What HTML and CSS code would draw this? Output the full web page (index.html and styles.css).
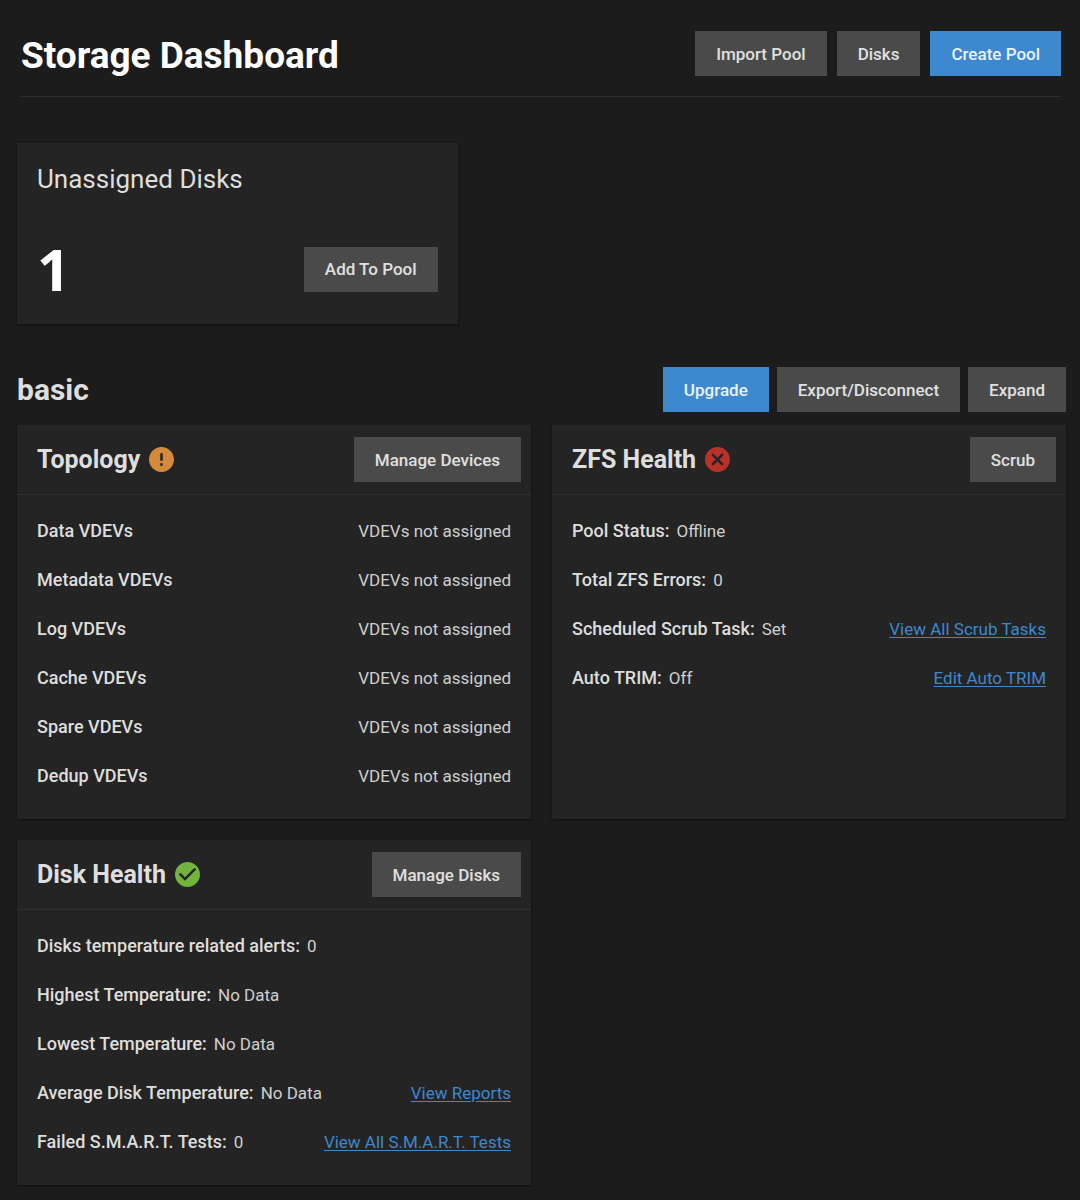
FILE: index.html
```html
<!DOCTYPE html>
<html lang="en">
<head>
<meta charset="utf-8">
<meta name="viewport" content="width=device-width, initial-scale=1">
<title>Storage Dashboard</title>
<link rel="stylesheet" href="styles.css">
</head>
<body>
<header class="page-header">
  <h1 class="page-title">Storage Dashboard</h1>
  <div class="page-actions">
    <button class="btn" type="button">Import Pool</button>
    <button class="btn" type="button">Disks</button>
    <button class="btn btn-primary" type="button">Create Pool</button>
  </div>
</header>

<main>
  <section class="card unassigned">
    <h2 class="unassigned-title">Unassigned Disks</h2>
    <div class="unassigned-body">
      <span class="unassigned-count">1</span>
      <button class="btn" type="button">Add To Pool</button>
    </div>
  </section>

  <section class="pool">
    <div class="pool-header">
      <h2 class="pool-name">basic</h2>
      <div class="pool-actions">
        <button class="btn btn-primary" type="button">Upgrade</button>
        <button class="btn" type="button">Export/Disconnect</button>
        <button class="btn" type="button">Expand</button>
      </div>
    </div>

    <div class="pool-cards">
      <article class="card">
        <div class="card-header">
          <h3 class="card-title">Topology</h3>
          <svg class="status warning" viewBox="2 2 20 20" aria-hidden="true"><path d="M12 2C6.48 2 2 6.48 2 12s4.480 10 10 10 10-4.480 10-10S17.520 2 12 2zm1 15h-2v-2h2v2zm0-4h-2V7h2v6z"/></svg>
          <button class="btn" type="button">Manage Devices</button>
        </div>
        <ul class="rows">
          <li class="row"><span class="label">Data VDEVs</span><span class="end">VDEVs not assigned</span></li>
          <li class="row"><span class="label">Metadata VDEVs</span><span class="end">VDEVs not assigned</span></li>
          <li class="row"><span class="label">Log VDEVs</span><span class="end">VDEVs not assigned</span></li>
          <li class="row"><span class="label">Cache VDEVs</span><span class="end">VDEVs not assigned</span></li>
          <li class="row"><span class="label">Spare VDEVs</span><span class="end">VDEVs not assigned</span></li>
          <li class="row"><span class="label">Dedup VDEVs</span><span class="end">VDEVs not assigned</span></li>
        </ul>
      </article>

      <article class="card">
        <div class="card-header">
          <h3 class="card-title">ZFS Health</h3>
          <svg class="status error" viewBox="2 2 20 20" aria-hidden="true"><path d="M12 2C6.470 2 2 6.470 2 12s4.470 10 10 10 10-4.470 10-10S17.530 2 12 2zm5 13.590L15.590 17 12 13.410 8.410 17 7 15.590 10.590 12 7 8.410 8.410 7 12 10.590 15.590 7 17 8.410 13.410 12 17 15.590z"/></svg>
          <button class="btn" type="button">Scrub</button>
        </div>
        <ul class="rows">
          <li class="row"><span class="label">Pool Status:</span><span>Offline</span></li>
          <li class="row"><span class="label">Total ZFS Errors:</span><span>0</span></li>
          <li class="row"><span class="label">Scheduled Scrub Task:</span><span>Set</span><a class="end" href="#scrub-tasks">View All Scrub Tasks</a></li>
          <li class="row"><span class="label">Auto TRIM:</span><span>Off</span><a class="end" href="#auto-trim">Edit Auto TRIM</a></li>
        </ul>
      </article>

      <article class="card">
        <div class="card-header">
          <h3 class="card-title">Disk Health</h3>
          <svg class="status success" viewBox="2 2 20 20" aria-hidden="true"><path d="M12 2C6.480 2 2 6.480 2 12s4.480 10 10 10 10-4.480 10-10S17.520 2 12 2zm-2 15l-5-5 1.410-1.410L10 14.170l7.590-7.590L19 8l-9 9z"/></svg>
          <button class="btn" type="button">Manage Disks</button>
        </div>
        <ul class="rows">
          <li class="row"><span class="label">Disks temperature related alerts:</span><span>0</span></li>
          <li class="row"><span class="label">Highest Temperature:</span><span>No Data</span></li>
          <li class="row"><span class="label">Lowest Temperature:</span><span>No Data</span></li>
          <li class="row"><span class="label">Average Disk Temperature:</span><span>No Data</span><a class="end" href="#reports">View Reports</a></li>
          <li class="row"><span class="label">Failed S.M.A.R.T. Tests:</span><span>0</span><a class="end" href="#smart-tests">View All S.M.A.R.T. Tests</a></li>
        </ul>
      </article>
    </div>
  </section>
</main>
</body>
</html>
```
FILE: styles.css
```css
* {
  box-sizing: border-box;
}

body {
  margin: 0;
  padding: 0 14px 15px 17px;
  background: #1c1c1c;
  color: #cfcfcf;
  font: 400 17px/24px Roboto, "Liberation Sans", sans-serif;
}

h1, h2, h3, ul {
  margin: 0;
  padding: 0;
}

.page-header {
  display: flex;
  align-items: flex-end;
  justify-content: space-between;
  margin: 0 5px 46px 4px;
  padding: 31px 0 20px;
  border-bottom: 1px solid #303030;
}

.page-title {
  color: #fff;
  font: 700 37px/40px Roboto, sans-serif;
}

.page-actions {
  display: flex;
  gap: 10px;
}

.btn {
  height: 45px;
  padding: 0 21px;
  border: 0;
  background: #4a4a4a;
  color: #e0e0e0;
  font: 500 17px/24px Roboto, "Liberation Sans", sans-serif;
  white-space: nowrap;
}

.btn-primary {
  background: #3d88cf;
  color: #eaf2fa;
}

.card {
  background: #242424;
  box-shadow: 0 1px 2px rgba(0, 0, 0, 0.5);
}

.unassigned {
  width: 42%;
  margin-bottom: 43px;
  padding: 18px 20px 22px;
}

.unassigned-title {
  color: #dedede;
  font-size: 26px;
  font-weight: 400;
  line-height: 36px;
}

.unassigned-body {
  display: flex;
  align-items: center;
  justify-content: space-between;
  margin-top: 39px;
}

.unassigned-count {
  color: #fff;
  font: 700 58px/66px "Noto Sans", sans-serif;
}

.pool-header {
  display: flex;
  align-items: center;
  justify-content: space-between;
  padding-bottom: 13px;
}

.pool-name {
  color: #dedede;
  font: 700 30px/40px Roboto, sans-serif;
}

.pool-actions {
  display: flex;
  gap: 8px;
}

.pool-cards {
  display: grid;
  grid-template-columns: 1fr 1fr;
  gap: 21px;
}

.card-header {
  display: flex;
  align-items: center;
  gap: 9px;
  padding: 12px 10px 12px 20px;
  border-bottom: 1px solid #303030;
}

.card-header .btn {
  margin-left: auto;
}

.card-title {
  color: #dedede;
  font: 700 25px/32px Roboto, sans-serif;
}

.status {
  width: 25px;
  height: 25px;
}

.warning {
  fill: #d58a3b;
}

.error {
  fill: #b9322a;
}

.success {
  fill: #71b53e;
}

.rows {
  padding: 11px 20px 19px;
  list-style: none;
}

.row {
  display: flex;
  align-items: center;
  gap: 7px;
  min-height: 49px;
}

.label {
  color: #dedede;
  font-size: 18px;
  font-weight: 500;
}

.end {
  margin-left: auto;
}

a {
  color: #3d88cf;
  text-underline-offset: 2px;
}
```
